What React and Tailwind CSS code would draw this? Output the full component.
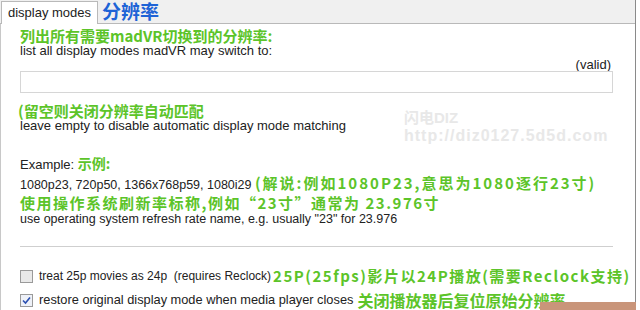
import React from "react";

const en = { fontFamily: '"Liberation Sans", "Noto Sans CJK SC", sans-serif' };
const cn = { fontFamily: '"Noto Sans CJK SC", "Liberation Sans", sans-serif' };

const Green = ({ children, className = "" }) => (
  <span className={`font-bold text-[#5cc429] whitespace-nowrap ${className}`} style={cn}>
    {children}
  </span>
);

export default function App() {
  return (
    <div className="w-[640px] h-[310px] bg-white overflow-hidden relative" style={en}>
      <div className="flex h-full">
        <div className="w-[636px] flex flex-col border-r border-[#8a8a8a]">
          {/* tab strip */}
          <div className="h-[24px] bg-[#f0f0f0] flex items-end border-b border-[#b9b9b9] relative">
            <div className="h-[23px] w-[97px] bg-white border border-b-0 border-[#b9b9b9] ml-[1px] -mb-px flex items-center justify-center text-[13px] text-[#222]">
              display modes
            </div>
            <div className="ml-[4px] self-start text-[19px] font-bold text-[#1e63d6] leading-[22px]" style={cn}>
              分辨率
            </div>
          </div>
          {/* panel */}
          <div className="flex-1 border-l border-[#c8c8c8] pl-[19px] pr-[22px] text-[13px] text-[#222] flex flex-col relative">
            <Green className="text-[15px] leading-[17px] mt-[3px]">列出所有需要madVR切换到的分辨率:</Green>
            <div className="leading-[14px]">list all display modes madVR may switch to:</div>
            <div className="text-right leading-[13px] pr-[2px]">(valid)</div>
            <div className="h-[22px] border border-[#d6d6d6] bg-white" />
            <Green className="text-[15px] leading-[18px] mt-[9px] -ml-[2px]">(留空则关闭分辨率自动匹配</Green>
            <div className="leading-[14px] -mt-[1px]">leave empty to disable automatic display mode matching</div>
            <div className="mt-[23px] leading-[14px]">
              Example: <Green className="text-[14px]">示例:</Green>
            </div>
            <div className="mt-[3px] leading-[16px] whitespace-nowrap text-[12.5px]">
              1080p23, 720p50, 1366x768p59, 1080i29 <Green className="text-[15px] tracking-[2px]">(解说:例如1080P23,意思为1080逐行23寸)</Green>
            </div>
            <Green className="text-[15px] leading-[18px] tracking-[1.5px] mt-[1px]">使用操作系统刷新率标称,例如“23寸”通常为 23.976寸</Green>
            <div className="leading-[14px] text-[12.5px]">use operating system refresh rate name, e.g. usually "23" for 23.976</div>
            <div className="h-px bg-[#cfcfcf] mt-[20px]" />
            <div className="flex items-center mt-[21px] h-[16px] whitespace-nowrap text-[12px]">
              <div className="w-[13px] h-[13px] shrink-0 border border-[#9a9a9a] bg-[#e9e9e9] mr-[6px]" />
              <span className="whitespace-pre">treat 25p movies as 24p  (requires Reclock)</span>
              <Green className="text-[15px] tracking-[1.5px] ml-[2px]">25P(25fps)影片以24P播放(需要Reclock支持)</Green>
            </div>
            <div className="flex items-center mt-[8px] h-[16px] whitespace-nowrap text-[12.8px]">
              <div className="w-[13px] h-[13px] shrink-0 border border-[#9a9a9a] bg-[#eef1f8] mr-[6px] flex items-center justify-center">
                <svg width="9" height="9" viewBox="0 0 9 9">
                  <path d="M1 4.5 L3.5 7 L8 1.5" stroke="#2a4fb0" strokeWidth="1.6" fill="none" />
                </svg>
              </div>
              <span>restore original display mode when media player closes</span>
              <Green className="text-[16px] ml-[4px] leading-[16px]">关闭播放器后复位原始分辨率</Green>
            </div>
            {/* watermark */}
            <div className="absolute left-[403px] top-[85px] text-[#e8e8e8] font-bold leading-[18px] whitespace-nowrap">
              <div className="text-[15px]">闪电DIZ</div>
              <div className="text-[16px] tracking-[1px]">http://diz0127.5d5d.com</div>
            </div>
          </div>
        </div>
        <div className="flex-1 bg-white" />
      </div>
      <div className="absolute left-[540px] top-[302px] w-[96px] h-[8px] bg-[#c9957a]" />
    </div>
  );
}
